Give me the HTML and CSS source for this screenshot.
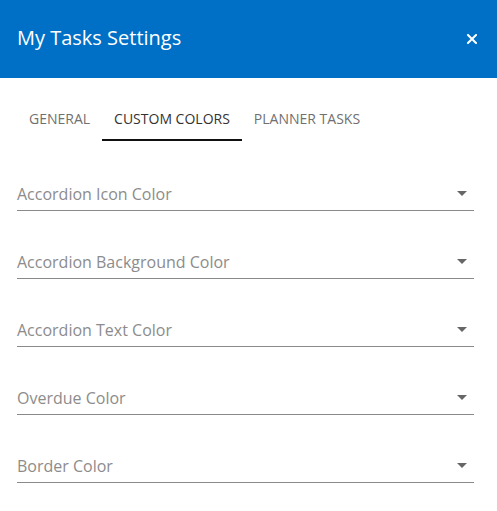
FILE: index.html
```html
<!DOCTYPE html>
<html lang="en">
<head>
<meta charset="utf-8">
<title>My Tasks Settings</title>
<link rel="stylesheet" href="styles.css">
</head>
<body>
<div class="dialog">
  <header class="header">
    <h1 class="title">My Tasks Settings</h1>
    <button class="close" aria-label="Close">
      <svg width="10" height="10" viewBox="0 0 10 10"><path d="M1 1 L9 9 M9 1 L1 9" stroke="#fff" stroke-width="2" stroke-linecap="square"/></svg>
    </button>
  </header>
  <nav class="tabs">
    <div class="tab">GENERAL</div>
    <div class="tab active">CUSTOM COLORS</div>
    <div class="tab">PLANNER TASKS</div>
  </nav>
  <div class="fields">
    <div class="field"><span class="label">Accordion Icon Color</span><svg class="arrow" width="10" height="5" viewBox="0 0 10 5"><path d="M0 0 L10 0 L5 5 Z"/></svg></div>
    <div class="field"><span class="label">Accordion Background Color</span><svg class="arrow" width="10" height="5" viewBox="0 0 10 5"><path d="M0 0 L10 0 L5 5 Z"/></svg></div>
    <div class="field"><span class="label">Accordion Text Color</span><svg class="arrow" width="10" height="5" viewBox="0 0 10 5"><path d="M0 0 L10 0 L5 5 Z"/></svg></div>
    <div class="field"><span class="label">Overdue Color</span><svg class="arrow" width="10" height="5" viewBox="0 0 10 5"><path d="M0 0 L10 0 L5 5 Z"/></svg></div>
    <div class="field"><span class="label">Border Color</span><svg class="arrow" width="10" height="5" viewBox="0 0 10 5"><path d="M0 0 L10 0 L5 5 Z"/></svg></div>
  </div>
</div>
</body>
</html>
```
FILE: styles.css
```css
html, body {
  margin: 0;
  padding: 0;
  background: #fff;
  font-family: "Open Sans", "Noto Sans", sans-serif;
}
.header {
  height: 78px;
  background: #0070c6;
  display: flex;
  align-items: center;
  justify-content: space-between;
  padding: 0 19px 0 17px;
}
.title {
  margin: 0;
  font-size: 20px;
  font-weight: 400;
  color: #fff;
  line-height: 26px;
  padding-bottom: 2px;
}
.close {
  background: none;
  border: 0;
  padding: 0;
  width: 12px;
  height: 12px;
  display: flex;
  align-items: center;
  justify-content: center;
}
.tabs {
  display: flex;
  padding: 0 17px;
  margin-top: 19px;
}
.tab {
  padding: 13px 12px 0;
  height: 29px;
  font-size: 14px;
  line-height: 18px;
  color: #707070;
  border-bottom: 2px solid transparent;
}
.tab.active {
  color: #333;
  border-bottom-color: #111;
}
.fields {
  padding: 2px 23px 0 17px;
}
.field {
  display: flex;
  align-items: center;
  justify-content: space-between;
  margin-top: 41px;
  padding-bottom: 6px;
  border-bottom: 1px solid #8a8a8a;
}
.label {
  font-size: 16px;
  line-height: 20px;
  color: #8c8c8c;
}
.arrow {
  fill: #666;
  margin-right: 7px;
  margin-top: -2px;
}
```
